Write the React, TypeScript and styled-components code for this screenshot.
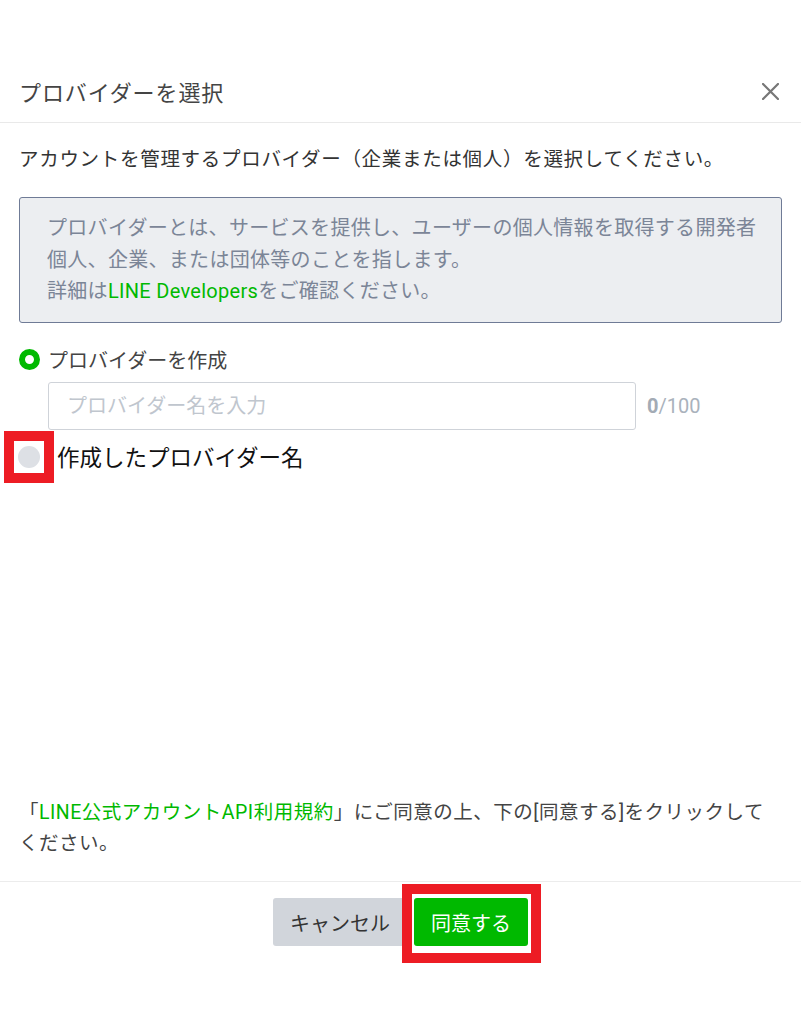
import styled, { createGlobalStyle } from "styled-components"

const GlobalStyle = createGlobalStyle`
    html, body {
        margin: 0;
        padding: 0;
        background: #ffffff;
    }
    body {
        font-family: Roboto, "Noto Sans CJK JP", "Noto Sans", sans-serif;
        color: #333333;
    }
    * {
        box-sizing: border-box;
    }
`

const GREEN = "#00b900"
const ANNOTATION = "#ed1c24"

function CloseIcon() {
    return (
        <svg width="17" height="17" viewBox="0 0 17 17" fill="none">
            <path
                d="M1 1L16 16M16 1L1 16"
                stroke="#777777"
                strokeWidth="2.2"
                strokeLinecap="square"
            />
        </svg>
    )
}

export default function App() {
    return (
        <>
            <GlobalStyle />
            <Modal>
                <Header>
                    <Title>プロバイダーを選択</Title>
                    <CloseButton aria-label="閉じる">
                        <CloseIcon />
                    </CloseButton>
                </Header>

                <Body>
                    <Lead>
                        アカウントを管理するプロバイダー（企業または個人）を選択してください。
                    </Lead>

                    <InfoBox>
                        プロバイダーとは、サービスを提供し、ユーザーの個人情報を取得する開発者
                        <br />
                        個人、企業、または団体等のことを指します。
                        <br />
                        詳細は<Link>LINE Developers</Link>をご確認ください。
                    </InfoBox>

                    <RadioRow>
                        <RadioOn />
                        <RadioLabel>プロバイダーを作成</RadioLabel>
                    </RadioRow>

                    <InputRow>
                        <NameInput placeholder="プロバイダー名を入力" />
                        <Counter>
                            <strong>0</strong>/100
                        </Counter>
                    </InputRow>

                    <ExistingRow>
                        <Highlight>
                            <RadioOff />
                        </Highlight>
                        <ExistingLabel>作成したプロバイダー名</ExistingLabel>
                    </ExistingRow>

                    <Terms>
                        「<Link>LINE公式アカウントAPI利用規約</Link>
                        」にご同意の上、下の[同意する]をクリックして
                        <br />
                        ください。
                    </Terms>
                </Body>

                <Footer>
                    <Button $variant="cancel">キャンセル</Button>
                    <AgreeWrap>
                        <Button $variant="primary">同意する</Button>
                        <AgreeFrame />
                    </AgreeWrap>
                </Footer>
            </Modal>
        </>
    )
}

const Modal = styled.div`
    width: 801px;
    height: 1024px;
    padding-top: 60px;
    display: flex;
    flex-direction: column;
    overflow: hidden;
`

const Header = styled.div`
    height: 63px;
    padding: 0 22px 0 19px;
    display: flex;
    align-items: center;
    justify-content: space-between;
    border-bottom: 1px solid #e9e9e9;
`

const Title = styled.div`
    font-size: 22px;
    line-height: 30px;
    letter-spacing: 0.9px;
    color: #444444;
    margin-top: 5px;
`

const CloseButton = styled.button`
    width: 17px;
    height: 17px;
    padding: 0;
    border: none;
    background: none;
    display: flex;
    cursor: pointer;
`

const Body = styled.div`
    height: 758px;
    padding: 22px 19px 22px;
    display: flex;
    flex-direction: column;
`

const Lead = styled.div`
    font-size: 19.5px;
    line-height: 30px;
    letter-spacing: 0.7px;
    color: #333333;
    white-space: nowrap;
`

const InfoBox = styled.div`
    margin-top: 22px;
    padding: 15px 10px 14px 27px;
    background: #eceef1;
    border: 1px solid #6f7b96;
    border-radius: 3px;
    font-size: 20px;
    line-height: 31.5px;
    letter-spacing: 0.3px;
    color: #7b8597;
    white-space: nowrap;
`

const Link = styled.span`
    color: ${GREEN};
`

const RadioRow = styled.div`
    margin-top: 22px;
    height: 30px;
    display: flex;
    align-items: center;
    gap: 8px;
`

const RadioOn = styled.span`
    width: 21px;
    height: 21px;
    border-radius: 50%;
    border: 6px solid ${GREEN};
    background: #ffffff;
    flex: none;
`

const RadioOff = styled.span`
    width: 22px;
    height: 22px;
    border-radius: 50%;
    background: #dde0e5;
`

const RadioLabel = styled.span`
    font-size: 20px;
    color: #444444;
`

const InputRow = styled.div`
    margin: 7px 0 0 29px;
    display: flex;
    align-items: center;
    gap: 11px;
`

const NameInput = styled.input`
    width: 588px;
    height: 48px;
    padding: 0 18px;
    border: 1px solid #cfd3d9;
    border-radius: 3px;
    font-family: inherit;
    font-size: 20px;
    color: #333333;
    outline: none;

    &::placeholder {
        color: #c0c6ce;
    }
`

const Counter = styled.span`
    font-size: 20px;
    color: #aab2bc;

    strong {
        color: #a3abb5;
        font-weight: 700;
    }
`

const ExistingRow = styled.div`
    margin: 1px 0 0 -15px;
    display: flex;
    align-items: center;
    gap: 3px;
`

const Highlight = styled.span`
    width: 50px;
    height: 52px;
    border: 10px solid ${ANNOTATION};
    padding-left: 4px;
    display: flex;
    align-items: center;
    background: #ffffff;
`

const ExistingLabel = styled.span`
    font-size: 22.5px;
    color: #111111;
    margin-top: -2px;
`

const Terms = styled.div`
    margin-top: auto;
    font-size: 19.5px;
    line-height: 31px;
    letter-spacing: 0.5px;
    color: #444444;
`

const Footer = styled.div`
    border-top: 1px solid #ececec;
    padding-top: 16px;
    display: flex;
    justify-content: center;
    gap: 7px;
`

const Button = styled.button<{ $variant: "cancel" | "primary" }>`
    height: 48px;
    padding: 0 17px;
    border: none;
    border-radius: 3px;
    font-family: inherit;
    font-size: 20px;
    cursor: pointer;
    background: ${({ $variant }) => ($variant === "primary" ? GREEN : "#d1d5db")};
    color: ${({ $variant }) => ($variant === "primary" ? "#ffffff" : "#333333")};
`

const AgreeWrap = styled.div`
    position: relative;
    display: flex;
`

const AgreeFrame = styled.span`
    position: absolute;
    inset: -14px -13px -17px -12px;
    border: 10px solid ${ANNOTATION};
    pointer-events: none;
`
